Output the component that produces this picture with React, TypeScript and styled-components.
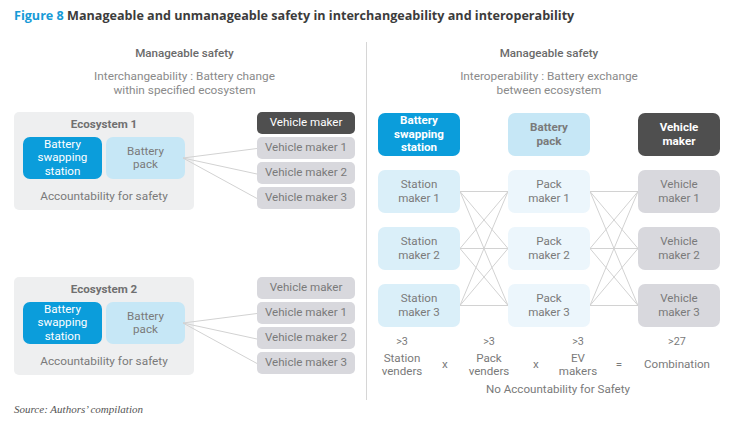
import React from "react";
import styled, { createGlobalStyle } from "styled-components";

const GlobalStyle = createGlobalStyle`
  html, body {
    margin: 0;
    padding: 0;
    background: #ffffff;
  }
  body {
    font-family: Roboto, "Noto Sans", sans-serif;
    color: #7a7a7a;
  }
`;

const Page = styled.div`
  width: 742px;
  height: 425px;
  box-sizing: border-box;
  padding: 7px 14px 0 14px;
  display: flex;
  flex-direction: column;
`;

const Title = styled.h1`
  margin: 0;
  font-family: "Open Sans", "Noto Sans", sans-serif;
  font-size: 12.6px;
  font-weight: 700;
  color: #3c3c3c;
  line-height: 17px;
  white-space: nowrap;
`;

const FigureNo = styled.span`
  color: #179bd7;
`;

const Body = styled.div`
  display: flex;
  margin-top: 18px;
  height: 358px;
`;

const LeftPanel = styled.div`
  width: 341px;
  display: flex;
  flex-direction: column;
`;

const Divider = styled.div`
  width: 1px;
  background: #d6d6d6;
  margin-left: 11px;
`;

const RightPanel = styled.div`
  margin-left: 11px;
  width: 342px;
  display: flex;
  flex-direction: column;
`;

const PanelHead = styled.div`
  font-size: 11.6px;
  font-weight: 500;
  color: #6a6a6a;
  text-align: center;
  margin-top: 4px;
  line-height: 14px;
`;

const PanelSub = styled.div`
  font-size: 11.8px;
  color: #8a8a8a;
  text-align: center;
  line-height: 13.5px;
  margin-top: 10px;
`;

const EcoRow = styled.div<{ $top: number }>`
  position: relative;
  display: flex;
  justify-content: space-between;
  margin-top: ${({ $top }) => $top}px;
  height: 98px;
`;

const EcoBox = styled.div`
  width: 180px;
  height: 98px;
  box-sizing: border-box;
  background: #eeeff0;
  border-radius: 5px;
  display: flex;
  flex-direction: column;
  align-items: center;
  padding: 5px 9px 0;
`;

const EcoTitle = styled.div`
  font-size: 11.6px;
  font-weight: 700;
  color: #707070;
  line-height: 14px;
`;

const EcoInner = styled.div`
  display: flex;
  gap: 4px;
  margin-top: 6px;
`;

type Tone = "blue" | "pale" | "mist" | "ice" | "dark" | "grey";

const fills: Record<Tone, string> = {
  blue: "#0b9ddb",
  pale: "#c6e7f6",
  mist: "#daeff9",
  ice: "#ecf6fc",
  dark: "#4f4f4f",
  grey: "#d8d8dd",
};

const Tile = styled.div<{ $tone: Tone; $w: number; $h: number; $bold?: boolean }>`
  width: ${({ $w }) => $w}px;
  height: ${({ $h }) => $h}px;
  box-sizing: border-box;
  border-radius: ${({ $h }) => ($h > 30 ? 7 : 5)}px;
  display: flex;
  align-items: center;
  justify-content: center;
  text-align: center;
  font-size: 11.6px;
  line-height: 13.5px;
  white-space: nowrap;
  font-weight: ${({ $bold }) => ($bold ? 700 : 400)};
  background: ${({ $tone }) => fills[$tone]};
  color: ${({ $tone }) => ($tone === "blue" || $tone === "dark" ? "#ffffff" : "#7a7a7a")};
`;

const EcoFoot = styled.div`
  font-size: 11.8px;
  color: #7a7a7a;
  margin-top: 10px;
  line-height: 14px;
  white-space: nowrap;
`;

const MakerCol = styled.div`
  width: 98px;
  display: flex;
  flex-direction: column;
  gap: 3px;
`;

const Overlay = styled.svg`
  position: absolute;
  left: 169px;
  top: 0;
  pointer-events: none;
`;

const Grid = styled.div`
  display: grid;
  grid-template-columns: 82px 48px 82px 48px 82px;
  grid-template-rows: 43px 43px 43px 43px;
  row-gap: 14px;
  margin-top: 16px;
`;

const Wires = styled.svg<{ $col: number }>`
  grid-row: 2 / span 3;
  grid-column: ${({ $col }) => $col};
  width: 48px;
  height: 157px;
`;

const Counts = styled.div`
  display: grid;
  grid-template-columns: 48px 38px 50px 44px 40px 42px 74px;
  grid-template-rows: 14px 28px;
  row-gap: 2px;
  margin-top: 8px;
  font-size: 11.6px;
  color: #7a7a7a;
  text-align: center;
  line-height: 13.5px;
`;

const Cell = styled.div<{ $row: number; $col: number }>`
  grid-row: ${({ $row }) => $row};
  grid-column: ${({ $col }) => $col};
  display: flex;
  align-items: center;
  justify-content: center;
  white-space: nowrap;
  font-size: ${({ $row }) => ($row === 1 ? "10.8px" : "inherit")};
`;

const Note = styled.div`
  font-size: 11.6px;
  color: #7a7a7a;
  text-align: center;
  padding-left: 18px;
  margin-top: 3px;
  line-height: 14px;
`;

const Source = styled.div`
  font-family: "Liberation Serif", "DejaVu Serif", serif;
  font-style: italic;
  font-size: 11px;
  color: #555555;
  margin-top: 3px;
`;

const lineColor = "#d2d2d2";

function FanLines() {
  const ends = [36.5, 62, 86.5];
  return (
    <Overlay width={74} height={98} viewBox="0 0 74 98">
      {ends.map((y) => (
        <line key={y} x1={0} y1={46} x2={74} y2={y} stroke={lineColor} strokeWidth={1} />
      ))}
    </Overlay>
  );
}

function MeshLines({ col }: { col: number }) {
  const ys = [21.5, 78.5, 135.5];
  return (
    <Wires $col={col} viewBox="0 0 48 157">
      {ys.flatMap((a) =>
        ys.map((b) => (
          <line key={`${a}-${b}`} x1={0} y1={a} x2={48} y2={b} stroke={lineColor} strokeWidth={1} />
        ))
      )}
    </Wires>
  );
}

function Ecosystem({ n, top, darkHead }: { n: number; top: number; darkHead: boolean }) {
  return (
    <EcoRow $top={top}>
      <EcoBox>
        <EcoTitle>Ecosystem {n}</EcoTitle>
        <EcoInner>
          <Tile $tone="blue" $w={79} $h={42}>
            Battery
            <br />
            swapping
            <br />
            station
          </Tile>
          <Tile $tone="pale" $w={79} $h={42}>
            Battery
            <br />
            pack
          </Tile>
        </EcoInner>
        <EcoFoot>Accountability for safety</EcoFoot>
      </EcoBox>
      <MakerCol>
        <Tile $tone={darkHead ? "dark" : "grey"} $w={98} $h={22}>
          Vehicle maker
        </Tile>
        {[1, 2, 3].map((i) => (
          <Tile key={i} $tone="grey" $w={98} $h={22}>
            Vehicle maker {i}
          </Tile>
        ))}
      </MakerCol>
      <FanLines />
    </EcoRow>
  );
}

export default function App() {
  return (
    <>
      <GlobalStyle />
      <Page>
        <Title>
          <FigureNo>Figure 8</FigureNo> Manageable and unmanageable safety in interchangeability and interoperability
        </Title>
        <Body>
          <LeftPanel>
            <PanelHead>Manageable safety</PanelHead>
            <PanelSub>
              Interchangeability : Battery change
              <br />
              within specified ecosystem
            </PanelSub>
            <Ecosystem n={1} top={15} darkHead />
            <Ecosystem n={2} top={67} darkHead={false} />
          </LeftPanel>
          <Divider />
          <RightPanel>
            <PanelHead>Manageable safety</PanelHead>
            <PanelSub>
              Interoperability : Battery exchange
              <br />
              between ecosystem
            </PanelSub>
            <Grid>
              <Tile $tone="blue" $w={82} $h={43} $bold style={{ gridColumn: 1 }}>
                Battery
                <br />
                swapping
                <br />
                station
              </Tile>
              <Tile $tone="pale" $w={82} $h={43} $bold style={{ gridColumn: 3 }}>
                Battery
                <br />
                pack
              </Tile>
              <Tile $tone="dark" $w={82} $h={43} $bold style={{ gridColumn: 5 }}>
                Vehicle
                <br />
                maker
              </Tile>
              {[1, 2, 3].map((i) => (
                <React.Fragment key={i}>
                  <Tile $tone="mist" $w={82} $h={43} style={{ gridColumn: 1, gridRow: i + 1 }}>
                    Station
                    <br />
                    maker {i}
                  </Tile>
                  <Tile $tone="ice" $w={82} $h={43} style={{ gridColumn: 3, gridRow: i + 1 }}>
                    Pack
                    <br />
                    maker {i}
                  </Tile>
                  <Tile $tone="grey" $w={82} $h={43} style={{ gridColumn: 5, gridRow: i + 1 }}>
                    Vehicle
                    <br />
                    maker {i}
                  </Tile>
                </React.Fragment>
              ))}
              <MeshLines col={2} />
              <MeshLines col={4} />
            </Grid>
            <Counts>
              <Cell $row={1} $col={1}>&gt;3</Cell>
              <Cell $row={1} $col={3}>&gt;3</Cell>
              <Cell $row={1} $col={5}>&gt;3</Cell>
              <Cell $row={1} $col={7}>&gt;27</Cell>
              <Cell $row={2} $col={1}>Station<br />venders</Cell>
              <Cell $row={2} $col={2}>x</Cell>
              <Cell $row={2} $col={3}>Pack<br />venders</Cell>
              <Cell $row={2} $col={4}>x</Cell>
              <Cell $row={2} $col={5}>EV<br />makers</Cell>
              <Cell $row={2} $col={6}>=</Cell>
              <Cell $row={2} $col={7}>Combination</Cell>
            </Counts>
            <Note>No Accountability for Safety</Note>
          </RightPanel>
        </Body>
        <Source>Source: Authors’ compilation</Source>
      </Page>
    </>
  );
}
